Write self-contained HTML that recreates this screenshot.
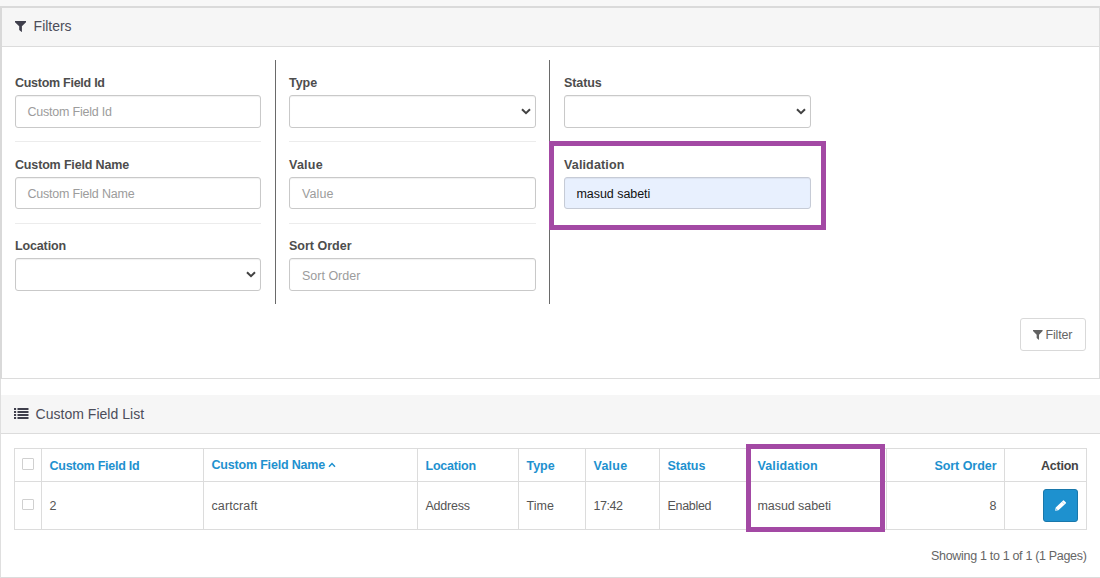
<!DOCTYPE html>
<html lang="en">
<head>
<meta charset="utf-8">
<title>Custom Fields</title>
<style>
*{box-sizing:border-box}
html,body{margin:0;padding:0}
body{width:1100px;height:578px;overflow:hidden;background:#fff;position:relative;
  font-family:"Liberation Sans",sans-serif;font-size:12.5px;color:#666}
.topstrip{position:absolute;left:0;top:0;width:1100px;height:6px;background:#f7f7f7}
.panel{position:absolute;left:0;width:1100px;background:#fff}
#p1{top:6px;height:373px;border-top:2px solid #dadada;border-left:2px solid #d9d9d9;border-right:1px solid #dcdcdc;border-bottom:1px solid #dcdcdc}
#p2{top:395px;height:183px;border-left:1px solid #dfdfdf;border-bottom:1px solid #dcdcdc}
.heading{position:absolute;left:0;right:0;top:0;background:#f6f6f6;border-bottom:1px solid #dcdcdc}
#p1 .heading{height:39px}
#p2 .heading{height:39px}
.title{position:absolute;margin:0;font-weight:400;font-size:14px;color:#4c4d5a;white-space:nowrap;line-height:1}
.abs{position:absolute}
label{position:absolute;font-weight:700;color:#4d4d4d;white-space:nowrap;line-height:1;font-size:12.5px}
.ctl{position:absolute;height:33px;width:246px;border:1px solid #c9c9c9;border-radius:3px;background:#fff;
  box-shadow:inset 0 1px 1px rgba(0,0,0,.06)}
.ctl span{position:absolute;left:11.5px;top:10px;line-height:1;color:#9c9c9c;white-space:nowrap;font-size:12.5px}
.ctl.fill{background:#e8f0fe;border-color:#c6cbd6}
.ctl.fill span{color:#111}
.ctl svg{position:absolute;right:4.5px;top:12px}
.sep{position:absolute;height:1px;background:#ececec;width:246px}
.vline{position:absolute;width:1px;background:#6a6a6a;top:60px;height:244px}
.hl{position:absolute;border:5px solid #a349a4}
.btn{position:absolute;left:1020px;top:318px;width:66px;height:33px;border:1px solid #d9d9d9;border-radius:3px;background:#fff;color:#666}
.btn span{position:absolute;left:24.5px;top:9.5px;line-height:1;font-size:12.5px;white-space:nowrap}
.btn svg{position:absolute;left:12px;top:11px}
table{position:absolute;left:14px;top:448px;border-collapse:collapse;table-layout:fixed;width:1073px}
td,th{border:1px solid #dcdcdc;padding:2px 0 0 7.5px;text-align:left;vertical-align:middle;white-space:nowrap;font-size:12.5px;line-height:1}
thead th{height:33px;font-weight:700;color:#1e91cf}
tbody td{height:48px;color:#555}
th.r,td.r{text-align:right;padding:2px 7.5px 0 0}
th.dark{color:#444}
.cb{display:block;width:11.5px;height:11.5px;border:1px solid #d0d0d0;border-radius:1px;background:#fff;margin:0}
.edit{position:absolute;left:1043px;top:489px;width:35px;height:33px;border-radius:3px;background:#1e91cf;border:1px solid #1978ab}
.edit svg{position:absolute;left:10.9px;top:10.1px}
.pag{position:absolute;right:13.5px;top:549.5px;line-height:1;color:#666;white-space:nowrap;font-size:12.5px;letter-spacing:-.32px}
</style>
</head>
<body>
<div class="topstrip"></div>
<div class="abs" style="left:0;top:7px;width:1px;height:571px;background:#dfdfdf"></div>

<div class="panel" id="p1">
  <div class="heading">
    <svg class="abs" style="left:13px;top:13px" width="11" height="11.2" viewBox="0 0 11 12" preserveAspectRatio="none"><path d="M0 0h11v1.3L6.9 5.6V12L4.2 9.6V5.6L0 1.3z" fill="#3f3f4c"/></svg>
    <h3 class="title" style="left:31.6px;top:10.5px;letter-spacing:-.02px">Filters</h3>
  </div>
</div>

<!-- column 1 -->
<label style="left:15px;top:77px;letter-spacing:-.27px">Custom Field Id</label>
<div class="ctl" style="left:15px;top:95px"><span style="letter-spacing:-.22px">Custom Field Id</span></div>
<div class="sep" style="left:15px;top:141px"></div>
<label style="left:15px;top:159px;letter-spacing:-.16px">Custom Field Name</label>
<div class="ctl" style="left:15px;top:177px;height:32px"><span style="letter-spacing:-.21px">Custom Field Name</span></div>
<div class="sep" style="left:15px;top:223px"></div>
<label style="left:15px;top:240px;letter-spacing:-.14px">Location</label>
<div class="ctl" style="left:15px;top:258px"><svg width="10" height="7" viewBox="0 0 10 7"><path d="M1 1.2L5 5.2L9 1.2" fill="none" stroke="#424242" stroke-width="2"/></svg></div>
<div class="vline" style="left:275px"></div>

<!-- column 2 -->
<label style="left:289px;top:77px;letter-spacing:-.02px">Type</label>
<div class="ctl" style="left:289px;top:95px;width:247px"><svg width="10" height="7" viewBox="0 0 10 7"><path d="M1 1.2L5 5.2L9 1.2" fill="none" stroke="#424242" stroke-width="2"/></svg></div>
<div class="sep" style="left:289px;top:141px;width:247px"></div>
<label style="left:289px;top:159px;letter-spacing:.23px">Value</label>
<div class="ctl" style="left:289px;top:177px;width:247px;height:32px"><span style="letter-spacing:.1px;left:12px">Value</span></div>
<div class="sep" style="left:289px;top:223px;width:247px"></div>
<label style="left:289px;top:240px;letter-spacing:0">Sort Order</label>
<div class="ctl" style="left:289px;top:258px;width:247px"><span style="letter-spacing:0;left:12px;top:11px">Sort Order</span></div>
<div class="vline" style="left:549px"></div>

<!-- column 3 -->
<label style="left:564px;top:77px;letter-spacing:-.1px">Status</label>
<div class="ctl" style="left:564px;top:95px;width:247px"><svg width="10" height="7" viewBox="0 0 10 7"><path d="M1 1.2L5 5.2L9 1.2" fill="none" stroke="#424242" stroke-width="2"/></svg></div>
<div class="hl" style="left:549px;top:141px;width:277px;height:89px;background:#fff"></div>
<label style="left:564px;top:159px;letter-spacing:.14px">Validation</label>
<div class="ctl fill" style="left:564px;top:177px;width:247px;height:32px"><span style="letter-spacing:-.05px">masud sabeti</span></div>

<div class="btn"><svg width="9.6" height="10" viewBox="0 0 11 12" preserveAspectRatio="none"><path d="M0 0h11v1.3L6.9 5.6V12L4.2 9.6V5.6L0 1.3z" fill="#626262"/></svg><span style="letter-spacing:-.15px">Filter</span></div>

<div class="panel" id="p2">
  <div class="heading">
    <svg class="abs" style="left:13px;top:13px" width="14.5" height="11" viewBox="0 0 15 11" preserveAspectRatio="none"><g fill="#3f3f4c"><rect x="0" y="0" width="2.2" height="2"/><rect x="3.6" y="0" width="11.4" height="2"/><rect x="0" y="3" width="2.2" height="2"/><rect x="3.6" y="3" width="11.4" height="2"/><rect x="0" y="6" width="2.2" height="2"/><rect x="3.6" y="6" width="11.4" height="2"/><rect x="0" y="9" width="2.2" height="2"/><rect x="3.6" y="9" width="11.4" height="2"/></g></svg>
    <h3 class="title" style="left:34.5px;top:11.5px;letter-spacing:.03px">Custom Field List</h3>
  </div>
</div>

<table>
  <colgroup><col style="width:27px"><col style="width:162px"><col style="width:214px"><col style="width:101px"><col style="width:67px"><col style="width:74px"><col style="width:90px"><col style="width:137px"><col style="width:118px"><col style="width:82px"></colgroup>
  <thead><tr>
    <th style="padding:0 0 2px 7px"><i class="cb"></i></th>
    <th style="letter-spacing:-.26px">Custom Field Id</th>
    <th style="letter-spacing:-.19px;padding-top:0">Custom Field Name <svg width="8" height="6" viewBox="0 0 8 6" style="vertical-align:1px"><path d="M1 4.8L4 1.6L7 4.8" fill="none" stroke="#1e91cf" stroke-width="1.5"/></svg></th>
    <th style="letter-spacing:-.21px">Location</th>
    <th style="letter-spacing:-.05px">Type</th>
    <th style="letter-spacing:.26px">Value</th>
    <th style="letter-spacing:-.06px">Status</th>
    <th style="letter-spacing:.13px">Validation</th>
    <th class="r" style="letter-spacing:-.04px">Sort Order</th>
    <th class="r dark" style="letter-spacing:-.24px">Action</th>
  </tr></thead>
  <tbody><tr>
    <td style="padding:0 0 2px 7px"><i class="cb"></i></td>
    <td>2</td>
    <td style="letter-spacing:.1px">cartcraft</td>
    <td style="letter-spacing:-.24px">Address</td>
    <td style="letter-spacing:.06px">Time</td>
    <td style="letter-spacing:-.47px">17:42</td>
    <td style="letter-spacing:-.3px">Enabled</td>
    <td style="letter-spacing:-.07px">masud sabeti</td>
    <td class="r">8</td>
    <td></td>
  </tr></tbody>
</table>
<div class="hl" style="left:746px;top:444px;width:139px;height:88px"></div>
<div class="edit"><svg width="11.4" height="11" viewBox="0 0 11.4 11"><path d="M0.15 10.85L0.7 7.6L8.1 0.4Q8.5 0 8.9 0.4L11 2.5Q11.4 2.9 11 3.3L3.4 10.3z" fill="#fff"/><path d="M6.9 1.6L9.6 4.3" stroke="#1e91cf" stroke-width=".45" opacity=".7"/><circle cx="1.7" cy="9.3" r=".55" fill="#1e91cf" opacity=".8"/></svg></div>
<div class="pag">Showing 1 to 1 of 1 (1 Pages)</div>
</body>
</html>
